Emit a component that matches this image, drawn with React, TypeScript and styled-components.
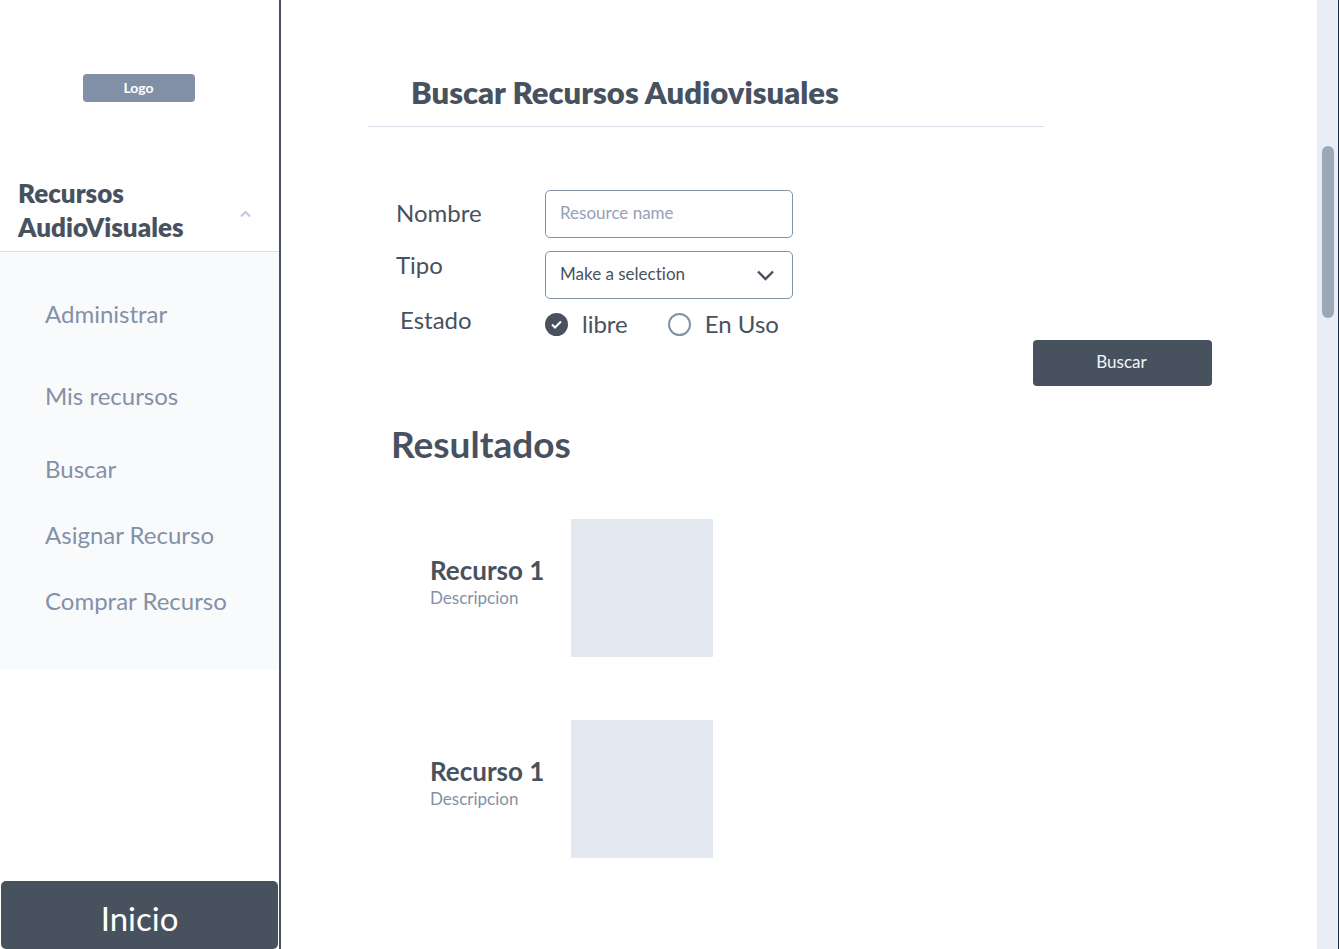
import React from "react";
import styled, { createGlobalStyle } from "styled-components";

const ink = "#48525f";
const muted = "#8391a7";
const pale = "#e4e8f1";

const GlobalStyle = createGlobalStyle`
  *, *::before, *::after { box-sizing: border-box; }
  body {
    margin: 0;
    background: #fff;
    color: ${ink};
    font-family: Lato, "Liberation Sans", sans-serif;
    font-variant-ligatures: none;
  }
  h1, h2, h3, p, ul { margin: 0; padding: 0; }
  ul { list-style: none; }
  button, input, select { font-family: inherit; font-variant-ligatures: none; }
`;

const Page = styled.div`
  display: flex;
  min-height: 100vh;
`;

const Sidebar = styled.aside`
  display: flex;
  flex-direction: column;
  flex: 0 0 281px;
  border-right: 2px solid #48525f;
  padding-top: 74px;
`;

const Logo = styled.a`
  align-self: center;
  width: 112px;
  margin-right: 2px;
  border-radius: 4px;
  background: #8290a7;
  color: #fff;
  font-size: 14px;
  font-weight: 700;
  line-height: 28px;
  text-align: center;
  text-decoration: none;
`;

const SectionToggle = styled.button`
  display: flex;
  align-items: flex-end;
  justify-content: space-between;
  margin-top: 74px;
  padding: 0 28px 7px 18px;
  border: 0;
  border-bottom: 1px solid #d9e0ea;
  background: none;
  color: ${ink};
  font-size: 26px;
  font-weight: 800;
  line-height: 34px;
  text-align: left;
  & > svg { margin-bottom: 26px; }
`;

const Menu = styled.ul`
  padding: 47px 0 53px 45px;
  background: #f9fafc;
`;

const MenuItem = styled.li<{ $space: number }>`
  padding-bottom: ${(p) => p.$space}px;
`;

const MenuLink = styled.a`
  display: block;
  color: ${muted};
  font-size: 24px;
  line-height: 30px;
  text-decoration: none;
`;

const HomeButton = styled.button`
  margin: auto 1px 0;
  padding: 6px 0 0;
  height: 68px;
  border: 0;
  border-radius: 5px;
  background: ${ink};
  color: #fff;
  font-size: 33px;
`;

const Main = styled.main`
  flex: 1;
  min-width: 0;
  padding: 70px 105px 60px 87px;
`;

const TitleBar = styled.header`
  max-width: 676px;
  padding: 0 43px 12px;
  border-bottom: 1px solid #d9e0ea;
`;

const Title = styled.h1`
  font-size: 31px;
  font-weight: 800;
  line-height: 44px;
`;

const SearchForm = styled.form`
  display: flex;
  align-items: flex-end;
  justify-content: space-between;
  margin-top: 63px;
  padding-left: 28px;
`;

const Fields = styled.div`
  display: grid;
  grid-template-columns: 149px 248px;
  row-gap: 13px;
  padding-bottom: 50px;
`;

const FieldLabel = styled.label`
  padding-top: 9px;
  font-size: 24px;
  line-height: 28px;
`;

const TopLabel = styled(FieldLabel)`
  padding-top: 0;
`;

const ChoiceLabel = styled(TopLabel)`
  padding-left: 4px;
  line-height: 16px;
`;

const TextInput = styled.input`
  width: 100%;
  height: 48px;
  padding: 0 14px 3px;
  border: 1px solid ${muted};
  border-radius: 5px;
  background: #fff;
  color: ${ink};
  font-size: 17px;
  &::placeholder { color: #94a1b7; opacity: 1; }
`;

const SelectWrap = styled.div`
  display: grid;
  align-items: center;
  & > * { grid-area: 1 / 1; }
  & > svg {
    justify-self: end;
    margin-right: 19px;
    pointer-events: none;
  }
`;

const Select = styled.select`
  width: 100%;
  height: 48px;
  padding: 0 14px 3px;
  border: 1px solid ${muted};
  border-radius: 5px;
  background: #fff;
  color: ${ink};
  font-size: 17px;
  appearance: none;
`;

const Choices = styled.div`
  display: flex;
  align-items: center;
  gap: 40px;
  height: 24px;
`;

const Choice = styled.label`
  display: flex;
  align-items: center;
  gap: 14px;
  font-size: 24px;
  line-height: 24px;
  white-space: nowrap;
`;

const RadioWrap = styled.span`
  display: grid;
  place-items: center;
  & > * { grid-area: 1 / 1; }
  & > svg { pointer-events: none; }
`;

const Radio = styled.input`
  width: 23px;
  height: 23px;
  margin: 0;
  border: 2px solid ${muted};
  border-radius: 50%;
  appearance: none;
  &:checked { border-color: ${ink}; background: ${ink}; }
`;

const SubmitButton = styled.button`
  width: 179px;
  height: 46px;
  padding: 0 2px 3px 0;
  border: 0;
  border-radius: 4px;
  background: ${ink};
  color: #f3f4f6;
  font-size: 17px;
`;

const Results = styled.section`
  margin-top: 34px;
  padding-left: 23px;
`;

const ResultsTitle = styled.h2`
  font-size: 37px;
  font-weight: 700;
  line-height: 48px;
`;

const ResultList = styled.ul`
  display: grid;
  gap: 63px;
  margin-top: 51px;
  padding-left: 39px;
`;

const ResultCard = styled.li`
  display: grid;
  grid-template-columns: 141px 142px;
  align-items: center;
`;

const ResultInfo = styled.div`
  padding-bottom: 12px;
`;

const ResultName = styled.h3`
  font-size: 26px;
  font-weight: 700;
  line-height: 32px;
`;

const ResultText = styled.p`
  color: ${muted};
  font-size: 17px;
  line-height: 24px;
`;

const Thumbnail = styled.div`
  height: 138px;
  background: ${pale};
`;

const ScrollTrack = styled.div`
  flex: 0 0 22px;
  padding: 146px 4px 0 5px;
  border-right: 1px solid #1c2b45;
  background: #e9edf5;
`;

const ScrollThumb = styled.div`
  height: 172px;
  border-radius: 6px;
  background: #9ba8b8;
`;

const menu = [
  { label: "Administrar", space: 52 },
  { label: "Mis recursos", space: 43 },
  { label: "Buscar", space: 36 },
  { label: "Asignar Recurso", space: 36 },
  { label: "Comprar Recurso", space: 0 },
];

const results = [
  { id: 1, name: "Recurso 1", text: "Descripcion" },
  { id: 2, name: "Recurso 1", text: "Descripcion" },
];

export default function App() {
  const [status, setStatus] = React.useState("libre");
  const [open, setOpen] = React.useState(true);

  return (
    <Page>
      <GlobalStyle />
      <Sidebar>
        <Logo href="#">Logo</Logo>
        <SectionToggle type="button" aria-expanded={open} onClick={() => setOpen(!open)}>
          <span>
            Recursos
            <br />
            AudioVisuales
          </span>
          <svg width="11" height="8" viewBox="0 0 11 8" fill="none" stroke="#bccade" strokeWidth="2" aria-hidden="true">
            <path d="M1 6.5 5.5 2 10 6.5" />
          </svg>
        </SectionToggle>
        {open && (
          <Menu>
            {menu.map((item) => (
              <MenuItem key={item.label} $space={item.space}>
                <MenuLink href="#">{item.label}</MenuLink>
              </MenuItem>
            ))}
          </Menu>
        )}
        <HomeButton type="button">Inicio</HomeButton>
      </Sidebar>

      <Main>
        <TitleBar>
          <Title>Buscar Recursos Audiovisuales</Title>
        </TitleBar>

        <SearchForm onSubmit={(e) => e.preventDefault()}>
          <Fields>
            <FieldLabel htmlFor="nombre">Nombre</FieldLabel>
            <TextInput id="nombre" type="text" placeholder="Resource name" />

            <TopLabel htmlFor="tipo">Tipo</TopLabel>
            <SelectWrap>
              <Select id="tipo" defaultValue="">
                <option value="">Make a selection</option>
              </Select>
              <svg width="17" height="11" viewBox="0 0 17 11" fill="none" stroke={ink} strokeWidth="2.4" aria-hidden="true">
                <path d="M1 1.5 8.5 9 16 1.5" />
              </svg>
            </SelectWrap>

            <ChoiceLabel as="span" id="estado">Estado</ChoiceLabel>
            <Choices role="radiogroup" aria-labelledby="estado">
              {["libre", "En Uso"].map((value) => (
                <Choice key={value}>
                  <RadioWrap>
                    <Radio
                      type="radio"
                      name="estado"
                      value={value}
                      checked={status === value}
                      onChange={() => setStatus(value)}
                    />
                    {status === value && (
                      <svg width="11" height="9" viewBox="0 0 11 9" fill="none" stroke="#fff" strokeWidth="2" aria-hidden="true">
                        <path d="M1 4.5 4 7.5 10 1.5" />
                      </svg>
                    )}
                  </RadioWrap>
                  {value}
                </Choice>
              ))}
            </Choices>
          </Fields>
          <SubmitButton type="submit">Buscar</SubmitButton>
        </SearchForm>

        <Results>
          <ResultsTitle>Resultados</ResultsTitle>
          <ResultList>
            {results.map((r) => (
              <ResultCard key={r.id}>
                <ResultInfo>
                  <ResultName>{r.name}</ResultName>
                  <ResultText>{r.text}</ResultText>
                </ResultInfo>
                <Thumbnail />
              </ResultCard>
            ))}
          </ResultList>
        </Results>
      </Main>

      <ScrollTrack aria-hidden="true">
        <ScrollThumb />
      </ScrollTrack>
    </Page>
  );
}
